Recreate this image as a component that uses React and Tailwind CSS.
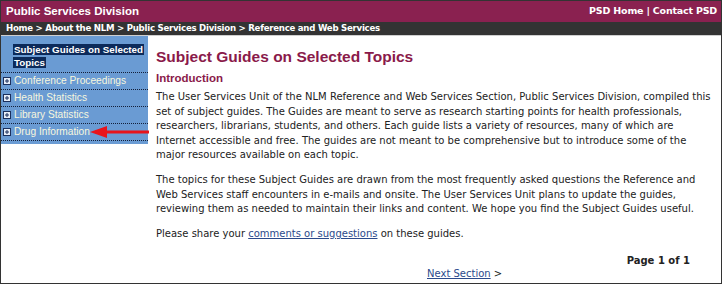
import React from "react";

const body = { fontFamily: '"DejaVu Sans", Verdana, sans-serif' };
const arial = { fontFamily: '"Liberation Sans", Arial, sans-serif' };

function PlusBox() {
  return (
    <svg width="8" height="8" viewBox="0 0 8 8" className="shrink-0">
      <rect x="0.5" y="0.5" width="7" height="7" fill="#e6edf8" stroke="#1b2f5c" />
      <path d="M2 4h4M4 2v4" stroke="#1b2f5c" strokeWidth="1" />
    </svg>
  );
}

const topics = ["Conference Proceedings", "Health Statistics", "Library Statistics", "Drug Information"];

export default function App() {
  return (
    <div className="w-[722px] h-[284px] border border-[#333] bg-white overflow-hidden flex flex-col">
      {/* title bar */}
      <div className="h-[21px] bg-[#8a2150] flex items-center justify-between pl-[5px] pr-[4px] text-white">
        <span className="font-bold text-[11.5px]" style={arial}>Public Services Division</span>
        <span className="font-bold text-[9.5px] tracking-[-0.2px]" style={body}>PSD Home | Contact PSD</span>
      </div>
      {/* breadcrumb */}
      <div className="h-[14px] bg-[#333] border-b border-[#cfcfcf] flex items-center pl-[5px] text-white">
        <span className="font-bold text-[8.6px] tracking-[-0.25px] whitespace-nowrap" style={body}>
          Home &gt; About the NLM &gt; Public Services Division &gt; Reference and Web Services
        </span>
      </div>

      <div className="flex flex-1">
        {/* sidebar */}
        <div className="relative w-[147px] self-start bg-[#6a9bd3] pb-[3px]" style={arial}>
          <div className="pt-[8px] pb-[3px] pl-[12px] border-b border-dotted border-[#14203a] text-[9.8px] leading-[12.5px] font-bold text-white whitespace-nowrap">
            <span className="bg-[#0c2a5a] px-[1px]">Subject Guides on Selected</span>
            <br />
            <span className="bg-[#0c2a5a] px-[1px]">Topics</span>
          </div>
          {topics.map((t) => (
            <div
              key={t}
              className="h-[17px] flex items-center gap-[3px] pl-[2px] border-b border-dotted border-[#14203a] text-[10.2px] text-[#f7f7de]"
            >
              <PlusBox />
              <span>{t}</span>
            </div>
          ))}
          {/* red annotation arrow */}
          <svg className="absolute left-[88px] top-[89px]" width="60" height="14" viewBox="0 0 60 14">
            <path d="M1 7L18 1V5.5H60V8.5H18V13Z" fill="#e8141c" />
          </svg>
        </div>

        {/* main content */}
        <div className="flex-1 pl-[8px] pr-[4px] text-[#222]" style={body}>
          <h1 className="mt-[12px] text-[15.5px] leading-[18px] font-bold text-[#8a1a4a]" style={arial}>
            Subject Guides on Selected Topics
          </h1>
          <h2 className="mt-[5px] text-[11.5px] leading-[14px] font-bold text-[#8a1a4a]" style={arial}>
            Introduction
          </h2>
          <p className="mt-[5px] text-[10px] leading-[14.5px] whitespace-nowrap">
            The User Services Unit of the NLM Reference and Web Services Section, Public Services Division, compiled this
            <br />
            set of subject guides. The Guides are meant to serve as research starting points for health professionals,
            <br />
            researchers, librarians, students, and others. Each guide lists a variety of resources, many of which are
            <br />
            Internet accessible and free. The guides are not meant to be comprehensive but to introduce some of the
            <br />
            major resources available on each topic.
          </p>
          <p className="mt-[10.5px] text-[10px] leading-[14.5px] whitespace-nowrap">
            The topics for these Subject Guides are drawn from the most frequently asked questions the Reference and
            <br />
            Web Services staff encounters in e-mails and onsite. The User Services Unit plans to update the guides,
            <br />
            reviewing them as needed to maintain their links and content. We hope you find the Subject Guides useful.
          </p>
          <p className="mt-[10.5px] text-[10px] leading-[14.5px] whitespace-nowrap">
            Please share your <a className="text-[#2b4a8c] underline">comments or suggestions</a> on these guides.
          </p>
          <div className="mt-[12.5px] flex justify-end pr-[27px] text-[10px] leading-[13px] font-bold">
            Page 1 of 1
          </div>
          <div className="pl-[271px] text-[10px] leading-[13px]">
            <a className="text-[#2b4a8c] underline">Next Section</a> &gt;
          </div>
        </div>
      </div>
    </div>
  );
}
